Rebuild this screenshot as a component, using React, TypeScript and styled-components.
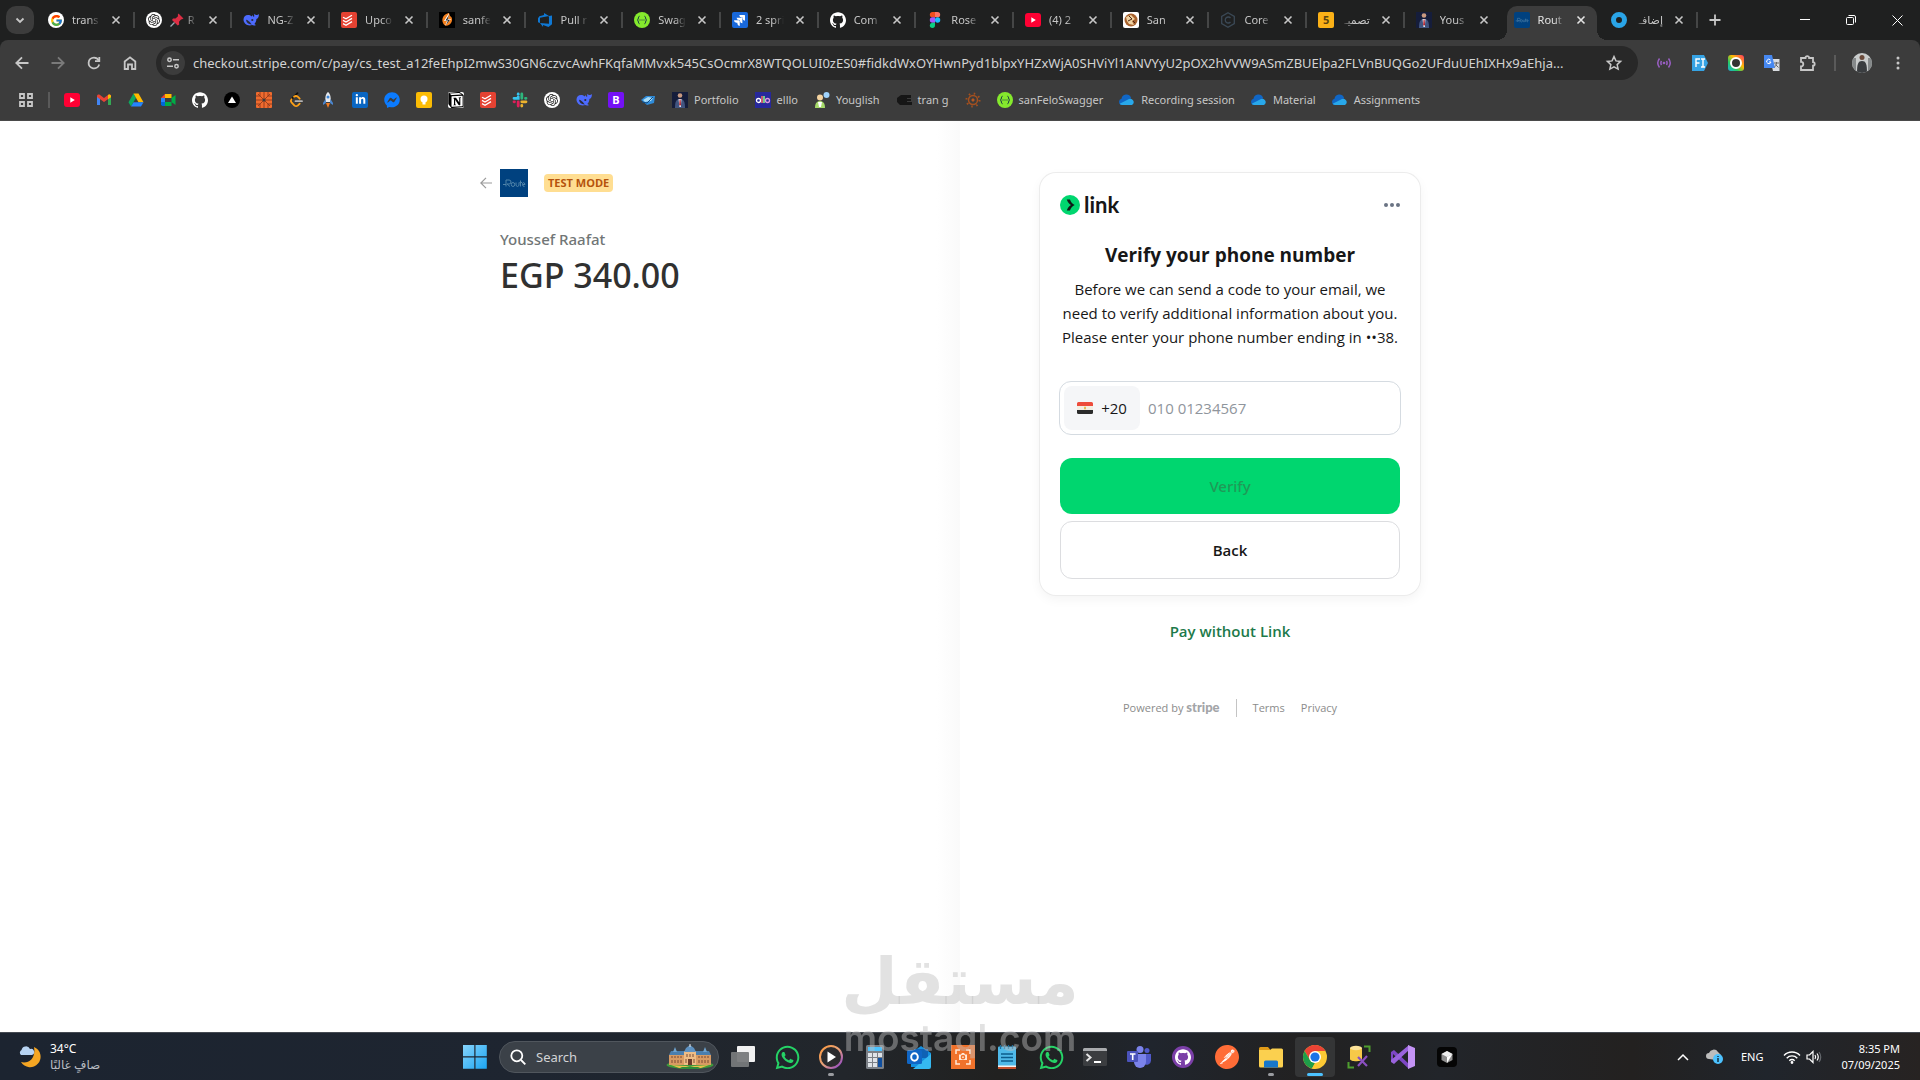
import React from 'react';
import styled, { createGlobalStyle, css } from 'styled-components';
import { FcGoogle } from 'react-icons/fc';
import { SiOpenai, SiGithub, SiJira, SiNotion, SiPostman } from 'react-icons/si';
import { FaWhatsapp, FaLinkedinIn, FaFacebookMessenger } from 'react-icons/fa';
import { VscAzureDevops } from 'react-icons/vsc';

const ui = '"Noto Sans", "Open Sans", "DejaVu Sans", sans-serif';
const pageFont = '"Open Sans", "Noto Sans", "DejaVu Sans", sans-serif';

const GlobalStyle = createGlobalStyle`
  *, *::before, *::after { box-sizing: border-box; }
  body { margin: 0; background: #fff; font-family: ${pageFont}; }
  button, input { font: inherit; color: inherit; border: 0; padding: 0; background: none; }
  button { display: inline-flex; align-items: center; justify-content: center; }
  a { color: inherit; text-decoration: none; }
  h1, h2, p { margin: 0; }
  svg { display: block; flex: none; }
`;

const Screen = styled.div`
  display: flex;
  flex-direction: column;
  min-height: 100vh;
  background: #1f2020;
`;

/* ---------- Browser chrome ---------- */

const TabStrip = styled.header`
  display: flex;
  height: 40px;
  background: #1f2020;
  color: #c7c7c7;
  font: 11px/16px ${ui};
`;

const TabSearchSlot = styled.div`
  flex: none;
  width: 37px;
  padding: 6px 3px 6px 6px;
`;

const TabSearch = styled.button`
  width: 28px;
  height: 28px;
  border-radius: 10px;
  background: #3c3c3c;
`;

const Tabs = styled.nav`
  display: flex;
  flex: 1;
  min-width: 0;
`;

const Tab = styled.div<{ $active?: boolean; $bare?: boolean }>`
  position: relative;
  display: flex;
  flex: 1 1 0;
  min-width: 0;
  align-items: center;
  gap: 8px;
  padding: 0 9px 0 11px;
  border-right: 2px solid transparent;
  background: ${p => (p.$active || p.$bare ? 'none' : 'linear-gradient(#454646, #454646) right center / 2px 16px no-repeat border-box')};
  ${p =>
    p.$active &&
    css`
      color: #e3e3e3;
      &::before {
        content: '';
        position: absolute;
        inset: 6px 1px 0 4px;
        border-radius: 10px 10px 0 0;
        background: #3c3c3c;
      }
      &::after {
        content: '';
        position: absolute;
        inset: auto -9px 0 -6px;
        height: 10px;
        background:
          radial-gradient(circle at 0 0, transparent 10px, #3c3c3c 10px) left / 10px 10px no-repeat,
          radial-gradient(circle at 100% 0, transparent 10px, #3c3c3c 10px) right / 10px 10px no-repeat;
      }
    `}
  & > * { position: relative; z-index: 1; }
`;

const TabTitle = styled.span<{ $rtl?: boolean }>`
  display: flex;
  flex: 1;
  align-items: center;
  gap: 4px;
  min-width: 0;
  overflow: hidden;
  white-space: nowrap;
  direction: ${p => (p.$rtl ? 'rtl' : 'ltr')};
  mask-image: linear-gradient(to ${p => (p.$rtl ? 'left' : 'right')}, #000 60%, transparent);
`;

const TabClose = styled.button`
  flex: none;
  width: 16px;
  height: 16px;
`;

const StripEnd = styled.div`
  display: flex;
  flex: none;
  width: 222px;
  align-items: center;
  justify-content: space-between;
  color: #fff;
`;

const NewTab = styled.button`
  width: 34px;
  height: 28px;
  color: #c7c7c7;
`;

const WindowButton = styled.button`
  width: 46px;
  height: 40px;
`;

const Row = styled.div`
  display: flex;
  align-items: center;
`;

const Toolbar = styled.div`
  display: flex;
  align-items: center;
  height: 46px;
  padding: 0 4px;
  border-radius: 8px 8px 0 0;
  background: #3c3c3c;
  color: #c7c7c7;
`;

const ToolButton = styled.button<{ $dim?: boolean }>`
  flex: none;
  width: 36px;
  height: 34px;
  color: ${p => (p.$dim ? '#7a7a7a' : '#c7c7c7')};
`;

const Omnibox = styled.label`
  display: flex;
  flex: 1;
  align-items: center;
  gap: 8px;
  height: 34px;
  margin: 0 8px;
  padding: 0 15px 0 5px;
  border-radius: 17px;
  background: #282828;
`;

const SiteInfo = styled.span`
  display: grid;
  place-items: center;
  width: 24px;
  height: 24px;
  border-radius: 50%;
  background: #3c3c3c;
`;

const Address = styled.input`
  flex: 1;
  min-width: 0;
  height: 24px;
  outline: 0;
  color: #d3d3d3;
  font: 13px/24px ${ui};
`;

const Divider = styled.span`
  flex: none;
  width: 2px;
  height: 16px;
  margin: 0 -2px;
  background: #5a5a5a;
`;

const ToolbarEnd = styled(Row)`
  flex: none;
`;

const DividerSlot = styled.span`
  display: flex;
  justify-content: center;
  width: 18px;
`;

const Bookmarks = styled.nav`
  display: flex;
  align-items: center;
  gap: 16px;
  height: 35px;
  padding: 0 18px 7px;
  border-bottom: 1px solid #4a4a4a;
  background: #3c3c3c;
  color: #c7c7c7;
  font: 11px/16px ${ui};
`;

const Bookmark = styled.a`
  display: flex;
  flex: none;
  align-items: center;
  gap: 6px;
  white-space: nowrap;
`;

const Tile = styled.span<{ $bg?: string; $fg?: string; $round?: boolean }>`
  display: grid;
  flex: none;
  place-items: center;
  width: 16px;
  height: 16px;
  overflow: hidden;
  border-radius: ${p => (p.$round ? '50%' : '2px')};
  background: ${p => p.$bg || 'transparent'};
  color: ${p => p.$fg || '#fff'};
  font: 700 11px/16px ${ui};
`;

/* ---------- Checkout page ---------- */

const Page = styled.main`
  display: flex;
  flex: 1;
  justify-content: center;
  padding: 48px 24px;
  background: linear-gradient(to right, #fff calc(50% - 24px), #fafafa 50%, #fff 50%);
`;

const Columns = styled.div`
  display: grid;
  grid-template-columns: 1fr 1fr;
  gap: 160px;
  width: 100%;
  max-width: 920px;
  align-items: start;
`;

const Summary = styled.section`
  display: flex;
  flex-direction: column;
`;

const Merchant = styled.div`
  display: flex;
  align-items: center;
  height: 28px;
  margin-left: -20px;
  margin-bottom: 28px;
`;

const BackLink = styled.a`
  width: 20px;
  color: #9a9a9a;
`;

const MerchantLogo = styled.span`
  display: grid;
  place-items: center;
  width: 28px;
  height: 28px;
  margin-right: 16px;
  background: #00417f;
`;

const TestBadge = styled.span`
  padding: 0 4px;
  border-radius: 4px;
  background: #ffde92;
  color: #b5530c;
  font: 700 11px/18px ${pageFont};
`;

const Payee = styled.p`
  color: #717676;
  font: 500 15px/28px ${ui};
`;

const Amount = styled.h1`
  color: #303131;
  font: 500 34px/44px ${ui};
`;

const Payment = styled.section`
  display: flex;
  flex-direction: column;
  align-items: center;
  padding-top: 4px;
`;

const Card = styled.form`
  display: flex;
  flex-direction: column;
  width: 100%;
  padding: 20px;
  padding-bottom: 16px;
  border-radius: 16px;
  box-shadow: 0 0 0 1px #ececec, 0 4px 12px rgba(0, 0, 0, 0.05);
  background: #fff;
  color: #171717;
`;

const CardHead = styled.div`
  display: flex;
  align-items: center;
  justify-content: space-between;
  height: 24px;
  margin-bottom: 24px;
`;

const LinkBrand = styled.span`
  display: flex;
  align-items: center;
  gap: 4px;
  font: 700 22px/24px Lato, sans-serif;
  color: #171717;
`;

const CardTitle = styled.h2`
  margin-bottom: 8px;
  font-size: 19px;
  font-weight: 700;
  line-height: 28px;
  text-align: center;
`;

const CardText = styled.p`
  margin: 0 -8px 32px;
  font-size: 15px;
  line-height: 24px;
  text-align: center;
`;

const PhoneField = styled.div`
  display: flex;
  align-items: center;
  gap: 8px;
  height: 54px;
  margin: 0 -1px 23px;
  padding: 0 4px;
  border: 1px solid #d5dbe1;
  border-radius: 12px;
  font-size: 15px;
`;

const CountryCode = styled.button`
  gap: 8px;
  width: 76px;
  height: 44px;
  border-radius: 8px;
  background: #f5f6f8;
`;

const PhoneInput = styled.input`
  flex: 1;
  min-width: 0;
  height: 44px;
  outline: 0;
  &::placeholder { color: #8f959c; opacity: 1; }
`;

const ActionButton = styled.button<{ $primary?: boolean }>`
  height: ${p => (p.$primary ? '56px' : '58px')};
  margin-bottom: ${p => (p.$primary ? '7px' : '0')};
  border: ${p => (p.$primary ? '0' : '1px solid #dcdde0')};
  border-radius: 12px;
  background: ${p => (p.$primary ? '#00d66f' : '#fff')};
  color: ${p => (p.$primary ? '#1f9a57' : '#171717')};
  font: ${p => (p.$primary ? 500 : 600)} 15px/24px ${p => (p.$primary ? ui : pageFont)};
`;

const PayWithout = styled.a`
  margin-top: 24px;
  color: #1d7a4a;
  font-size: 15px;
  font-weight: 600;
  line-height: 24px;
`;

const Legal = styled.footer`
  display: flex;
  align-items: center;
  gap: 16px;
  margin-top: 55px;
  color: #8b8b8b;
  font-size: 11px;
  line-height: 18px;
`;

const StripeMark = styled.b`
  font: 900 13px/18px Lato, sans-serif;
  color: #a3a5a8;
`;

const LegalRule = styled.span`
  width: 1px;
  height: 18px;
  background: #c4c4c4;
`;

/* ---------- Taskbar ---------- */

const Taskbar = styled.footer`
  display: grid;
  grid-template-columns: 1fr auto 1fr;
  align-items: center;
  height: 48px;
  border-top: 1px solid #454a52;
  background: linear-gradient(to right, #1c2430, #1e2530 28%, #22262b 44%, #212120 52%, #20252d 60%, #222121 68%, #22252a 75%, #232120 85%, #20252c 92%, #272322);
  color: #fff;
  font: 12px/16px ${ui};
`;

const Weather = styled(Row)`
  gap: 8px;
  padding-left: 18px;
`;

const Muted = styled.div`
  color: #b8bcc2;
`;

const Apps = styled.nav`
  display: flex;
  align-items: center;
`;

const StartButton = styled.button`
  width: 48px;
  height: 48px;
`;

const SearchBox = styled.label`
  display: flex;
  align-items: center;
  gap: 10px;
  width: 220px;
  height: 32px;
  margin-right: 2px;
  padding: 0 4px 0 10px;
  border: 1px solid #50565d;
  border-radius: 16px;
  background: #3b4148;
  input {
    flex: 1;
    min-width: 0;
    outline: 0;
    font-size: 13px;
  }
  input::placeholder { color: #d2d3d5; opacity: 1; }
`;

const AppButton = styled.button<{ $state?: 'open' | 'active' }>`
  position: relative;
  width: 40px;
  height: 40px;
  margin: 0 2px;
  border-radius: 4px;
  background: ${p => (p.$state === 'active' ? '#343536' : 'none')};
  ${p =>
    p.$state &&
    css`
      &::after {
        content: '';
        position: absolute;
        bottom: 1px;
        left: 50%;
        width: ${p.$state === 'active' ? 16 : 6}px;
        height: 3px;
        margin-left: ${p.$state === 'active' ? -8 : -3}px;
        border-radius: 2px;
        background: ${p.$state === 'active' ? '#4cc2ff' : '#9a9ca0'};
      }
    `}
`;

const Tray = styled(Row)`
  justify-content: flex-end;
  gap: 17px;
  padding-right: 20px;
  font-size: 11px;
`;

const Clock = styled.div`
  text-align: right;
`;

const Watermark = styled.div`
  position: fixed;
  inset: auto 0 22px;
  display: flex;
  flex-direction: column;
  align-items: center;
  color: rgba(190, 190, 190, 0.45);
  white-space: nowrap;
  pointer-events: none;
`;

const WatermarkArabic = styled.div`
  font: 700 65px/72px "DejaVu Sans", sans-serif;
`;

const WatermarkLatin = styled.div`
  font: 600 37px/40px Inter, sans-serif;
`;

/* ---------- Icons ---------- */

const X = () => (
  <svg width="16" height="16" viewBox="0 0 16 16" stroke="currentColor" strokeWidth="1.6" fill="none"><path d="M4.5 4.5l7 7M11.5 4.5l-7 7" /></svg>
);
const Yt = () => (
  <svg width="16" height="16" viewBox="0 0 16 16"><rect y="1" width="16" height="14" rx="3" fill="#ff0033" /><path d="M6.300 5.300v5.400L10.800 8z" fill="#fff" /></svg>
);
const Gpt = () => <Tile $bg="#fff" $fg="#222" $round><SiOpenai size={12} /></Tile>;
const TodoistMark = () => (
  <svg width="16" height="16" viewBox="0 0 16 16"><rect width="16" height="16" rx="2" fill="#e44232" /><path d="M2 5.200l3 1.600 6-3.600M2 8.400l3 1.600 6-3.600M2 11.600l3 1.600 6-3.600" fill="none" stroke="#fff" strokeWidth="1.300" /></svg>
);
const DeepSeek = () => (
  <svg width="16" height="16" viewBox="0 0 16 16"><path d="M.5 7.500C.5 5 2.300 3 5 3c1.500 0 2.500.4 3.600 1.500L9.500 3c.2.900.8 1.500 1.600 1.900.2-1.200 0-2.200.4-3.200.6 1 1.400 1.500 2.400 1.400.8-.1 1.300-.5 1.900-1 .3 2.400-.5 4.300-2.400 5 0 2-.8 3.700-2.100 4.900.5.500 1 .8 1.700 1-1.300.7-2.700.6-3.900.1C4.300 14.300.5 11.500.5 7.500z" fill="#4d6bfe" /><path d="M3 7.800c1.500.1 3.500 1.700 5 3.700.5.600.9.800.6.900C6 12.600 3.300 10.800 3 7.800z" fill="#2a2c3a" /><circle cx="9.300" cy="8" r="1.100" fill="#2a2c3a" /></svg>
);
const Figma = () => (
  <svg width="16" height="16" viewBox="0 0 16 16"><path d="M5.500 0H8v5.300H5.500a2.650 2.650 0 010-5.300z" fill="#f24e1e" /><path d="M8 0h2.500a2.650 2.650 0 010 5.300H8z" fill="#ff7262" /><path d="M5.500 5.300H8v5.400H5.500a2.700 2.700 0 010-5.400z" fill="#a259ff" /><circle cx="10.600" cy="8" r="2.650" fill="#1abcfe" /><path d="M5.500 10.700H8v2.600a2.600 2.600 0 11-2.500-2.600z" fill="#0acf83" /></svg>
);
const Swagger = () => (
  <svg width="16" height="16" viewBox="0 0 16 16"><circle cx="8" cy="8" r="8" fill="#85ea2d" /><g fill="none" stroke="#173647" strokeWidth="1"><path d="M5.600 4.200c-1.800 0-.6 3.200-2.300 3.800 1.700.6.500 3.800 2.300 3.800M10.400 4.200c1.800 0 .6 3.200 2.300 3.800-1.700.6-.5 3.800-2.300 3.800" /><path d="M5.500 8h5" strokeDasharray="1 1" /></g></svg>
);
const OneDrive = () => (
  <svg width="16" height="16" viewBox="0 0 16 16"><path d="M3.200 13A3.200 3.200 0 012.500 6.700 5 5 0 0112 5.500l-2 6z" fill="#1066c5" /><path d="M3 13c-1 0-1.800-.5-2.300-1.200L9 7.500c1.500-1 3.500-.8 4.500.3a3 3 0 01-.6 5.200z" fill="#28a8ea" /></svg>
);
const LeetCode = () => (
  <svg width="16" height="16" viewBox="0 0 16 16" fill="none" strokeWidth="1.800" strokeLinecap="round"><path d="M9.500 1.200L3.500 7.200" stroke="#111" /><path d="M3.500 7.200q-1.300 1.600 0 3.200l3 3.200q1.600 1.200 3.200 0l2-2" stroke="#ffa116" /><path d="M6 4.700q2-1.500 3.700 0l2 2" stroke="#ffa116" /><path d="M7.500 9.200h6.500" stroke="#b3b3b3" /></svg>
);
const Rocket = () => (
  <svg width="16" height="16" viewBox="0 0 16 16"><path d="M8 0c2.500 2 3 5 2.500 10h-5C5 5 5.500 2 8 0z" fill="#e6e9ee" /><circle cx="8" cy="5" r="1.500" fill="#3c86d8" /><path d="M5.500 7L3 11v2l3-2M10.500 7l2.500 4v2l-3-2" fill="#4a86d0" /><path d="M6 11h4l-2 5z" fill="#f37b21" /></svg>
);
const Gmail = () => (
  <svg width="16" height="16" viewBox="0 0 16 16"><path d="M1 4v9h3V6z" fill="#4285f4" /><path d="M15 4v9h-3V6z" fill="#34a853" /><path d="M1 4c0-1.600 1.700-2 2.700-1.200L8 6l4.300-3.200C13.300 2 15 2.400 15 4v1L8 10 1 5z" fill="#ea4335" /><path d="M12 3l1-.5c1 0 2 .5 2 1.500v1.200L12 7.300z" fill="#fbbc04" /></svg>
);
const Drive = () => (
  <svg width="16" height="16" viewBox="0 0 16 16"><path d="M5.500 1.500L.5 10.300 3 14.500l5-8.700z" fill="#0da960" /><path d="M5.500 1.500h5l5 8.800h-5z" fill="#ffba00" /><path d="M3 14.500l2.500-4.200h10L13 14.500z" fill="#2684fc" /></svg>
);
const Meet = () => (
  <svg width="16" height="16" viewBox="0 0 16 16"><path d="M1 6l4-4v4z" fill="#ea4335" /><path d="M5 2h6.500v4H5z" fill="#ffba00" /><path d="M1 6h4v4H1z" fill="#2684fc" /><path d="M1 10h4v4H2.500L1 13z" fill="#0066da" /><path d="M5 10h6.500v4H5zM11.500 6L15.500 3v10l-4-3z" fill="#00ac47" /></svg>
);
const Slack = () => (
  <svg width="16" height="16" viewBox="0 0 16 16" strokeWidth="2.800" strokeLinecap="round"><path d="M6.200 4.800V6.300H2" stroke="#36c5f0" fill="none" /><path d="M9.800 2v4.300M13.500 6.300h.5" stroke="#2eb67d" /><path d="M9.800 9.800H14M9.800 13.500v.5" stroke="#ecb22e" /><path d="M6.200 9.800V14M2 9.800h.5" stroke="#e01e5a" /><path d="M6.200 2v.2" stroke="#36c5f0" /></svg>
);
const Person = () => (
  <svg width="16" height="16" viewBox="0 0 16 16"><rect width="16" height="16" fill="#151d3b" /><circle cx="8" cy="3.500" r="2.300" fill="#c99a80" /><path d="M3 16c0-6 1-9 5-9s5 3 5 9z" fill="#41547f" /><path d="M6.500 7h3L8.800 15H7.500z" fill="#f2f4f8" /><path d="M7.600 7.500h1l.4 5-1 1.500-.8-1.500z" fill="#b1202b" /></svg>
);
const Blossom = () => (
  <svg width="16" height="16" viewBox="0 0 16 16"><rect width="16" height="16" rx="1" fill="#ef6b2e" /><path d="M0 8h16M8 0v16M2 2l12 12M14 2L2 14M4 0v4H0M12 0v4h4M4 16v-4H0M12 16v-4h4" stroke="#8e3a1d" strokeWidth=".9" fill="none" /><circle cx="8" cy="8" r="1.500" fill="#3c3c3c" /></svg>
);
const Flame = () => (
  <svg width="16" height="16" viewBox="0 0 16 16"><rect width="16" height="16" fill="#000" /><path d="M10 1C5 2 2 6 4 11c1 3 5 4 8 0 2-3 1-6-1-7z" fill="#f58220" /><path d="M10 1L5 9h3l-2 5 6-7H9z" fill="#fff" /><path d="M10 3L6.500 8.500H9L7 13l4-5.300H8.500z" fill="#222" /></svg>
);
const Gear = () => (
  <svg width="16" height="16" viewBox="0 0 16 16" fill="none" stroke="#a4501f"><circle cx="8" cy="8" r="4.500" strokeWidth="1.500" /><circle cx="8" cy="8" r="6.500" strokeWidth="2" strokeDasharray="1.500 3.600" /><circle cx="8" cy="8" r="1.200" fill="#e07030" /></svg>
);
const Pin = () => (
  <svg width="14" height="14" viewBox="0 0 14 14"><path d="M8.500.5L13.500 5.500l-1.500.8-1 .2-2 2.300.2 2.700-1.500 1L2 7l1-1.500 2.500.1L8 3.200l-.2-1.400z" fill="#dd2e44" /><path d="M4.500 9.500L.5 13.500" stroke="#99aab5" strokeWidth="1.300" /></svg>
);
const Ring = () => (
  <svg width="16" height="16" viewBox="0 0 16 16"><circle cx="8" cy="8" r="5.500" fill="none" stroke="#2aa5e8" strokeWidth="5" /></svg>
);
const RouteDrawing = ({ size }: { size: number }) => (
  <svg width={size} height={size} viewBox="0 0 28 28" fill="none" stroke="#4f83a9"><path d="M3 15.500h3M6 17.500V11h3a2 2 0 010 4H7l3 2.500" /><ellipse cx="13" cy="15.500" rx="1.700" ry="2" /><path d="M16 13.500v3q1.500 2 3 0v-3M20.500 11.500v6M19.500 13.500h2.500M22.500 15.500h2.500q-.5-2-1.500-2t-1 2 2 2" /></svg>
);
const WinLogo = () => (
  <svg width="24" height="24" viewBox="0 0 24 24"><defs><linearGradient id="win" x1="0" y1="0" x2="1" y2="1"><stop offset="0" stopColor="#86d3fb" /><stop offset="1" stopColor="#1ba5f2" /></linearGradient></defs><path d="M0 0h11.300v11.300H0zM12.500 0h11.300v11.300H12.500zM0 12.500h11.300v11.300H0zM12.500 12.500h11.300v11.300H12.500z" fill="url(#win)" /></svg>
);
const Palace = () => (
  <svg width="48" height="26" viewBox="0 0 48 26">
    <ellipse cx="24" cy="21" rx="23.500" ry="4" fill="#3f9a3b" />
    <path d="M3 11h42v10H3z" fill="#d99b63" />
    <path d="M3 11l2-4h13v4zM45 11l-2-4H30v4z" fill="#4c7fae" />
    <path d="M18 7h12v14H18z" fill="#eebd86" /><path d="M18 8l2-4 4-3 4 3 2 4z" fill="#5e92c2" />
    <path d="M7 8l2-5 2 5zM37 8l2-5 2 5z" fill="#6fa3cf" />
    <path d="M24 0v3" stroke="#e8e8e8" />
    <path d="M6 12v2M9 12v2M12 12v2M15 12v2M33 12v2M36 12v2M39 12v2M42 12v2M6 16v3M9 16v3M12 16v3M15 16v3M33 16v3M36 16v3M39 16v3M42 16v3M21 10v3M24 10v3M27 10v3M20 15v4M28 15v4" stroke="#7a4b34" />
    <path d="M22 15h4v6h-4z" fill="#6b3a2a" /><path d="M5 21l15 1 4 1 4-1 15-1-8 3H13z" fill="#e8c04b" /><path d="M14 23h20l-4 2H18z" fill="#2e8a39" />
  </svg>
);
const MoonCloud = () => (
  <svg width="24" height="24" viewBox="0 0 24 24"><path d="M16 2a10.500 10.500 0 11-13 15c8 2 15-4 13-15z" fill="#f5a623" /><path d="M3 10a3 3 0 01.5-5A4.500 4.500 0 0112 4a3 3 0 012 6z" fill="#b7d3f2" /></svg>
);
const TaskView = () => (
  <svg width="24" height="24" viewBox="0 0 24 24"><rect x="6" y="1" width="18" height="16" rx="1" fill="#f1f1f1" /><rect y="7" width="18" height="15" rx="1" fill="#77797b" fillOpacity=".95" /></svg>
);
const MediaPlayer = () => (
  <svg width="24" height="24" viewBox="0 0 24 24"><defs><linearGradient id="mp" x1="0" y1="0" x2="1" y2="1"><stop offset="0" stopColor="#ff9a3c" /><stop offset=".5" stopColor="#e7a27a" /><stop offset="1" stopColor="#8a3fd1" /></linearGradient></defs><circle cx="12" cy="12" r="11" fill="#2b2b2d" stroke="url(#mp)" strokeWidth="2" /><path d="M8.500 6.500v11l8.500-5.500z" fill="#fff" /></svg>
);
const Calculator = () => (
  <svg width="24" height="24" viewBox="0 0 24 24"><rect x="3" width="18" height="24" rx="1.500" fill="#7b8087" /><rect x="5" y="2" width="14" height="4" fill="#4cc2ff" /><path d="M5 8h4v4H5zM10 8h4v4h-4zM15 8h4v4h-4zM5 13h4v4H5zM10 13h4v4h-4zM5 18h4v4H5zM10 18h4v4h-4z" fill="#dfe3e8" /><path d="M15 13h4v9h-4z" fill="#0f4fa0" /></svg>
);
const Outlook = () => (
  <svg width="24" height="24" viewBox="0 0 24 24"><path d="M4 8l10-7 10 7v14H4z" fill="#1490df" /><path d="M7 4h14v9H7z" fill="#0f62b5" /><path d="M24 9v13a2 2 0 01-2 2H6L24 9z" fill="#35b8f1" /><rect y="5" width="15" height="14" rx="1.500" fill="#1066c5" /><ellipse cx="7.500" cy="12" rx="3.300" ry="3.700" fill="none" stroke="#fff" strokeWidth="2" /></svg>
);
const Capture = () => (
  <svg width="24" height="24" viewBox="0 0 24 24" fill="none" stroke="#ffe9d8" strokeWidth="1.500"><rect width="24" height="24" fill="#f0722b" stroke="none" /><path d="M5 9V5h4M15 5h4v4M19 15v4h-4M9 19H5v-4" /><path d="M8 9.500h2l1-1.500h2l1 1.500h2V15H8z" fill="#ffe9d8" stroke="none" /><circle cx="12" cy="12.200" r="1.600" stroke="#f0722b" /></svg>
);
const Notepad = () => (
  <svg width="24" height="24" viewBox="0 0 24 24"><rect x="3" y="19" width="18" height="5" fill="#c5512d" /><rect x="3" y="1.500" width="18" height="20" rx="1" fill="#4fb9e8" /><path d="M3 20.500h18v1.500H3z" fill="#f3f3f3" /><path d="M6 9h12M6 12.500h12M6 16h12" stroke="#0c5c8c" strokeWidth="1.500" /><path d="M5.500 0v4M9.500 0v4M13.500 0v4M17.500 0v4" stroke="#1d6d9b" strokeWidth="1.300" /></svg>
);
const Terminal = () => (
  <svg width="24" height="24" viewBox="0 0 24 24"><rect y="3" width="24" height="18" rx="1.500" fill="#3b3d40" /><path d="M0 4.500A1.500 1.500 0 011.500 3h21A1.500 1.500 0 0124 4.500V6H0z" fill="#a9abae" /><path d="M3.500 9l4 3.500-4 3.500" fill="none" stroke="#e5e5e5" strokeWidth="2" /><path d="M11 17h7" stroke="#fff" strokeWidth="2" /></svg>
);
const Teams = () => (
  <svg width="24" height="24" viewBox="0 0 24 24"><circle cx="13" cy="4.500" r="3.500" fill="#7b83eb" /><circle cx="20" cy="5.500" r="2.500" fill="#5059c9" /><path d="M15 9h9v6a4.500 4.500 0 01-7 4z" fill="#5059c9" /><path d="M7 9h12v8a6 6 0 01-12 0z" fill="#7b83eb" /><rect y="6" width="11" height="11" rx="1" fill="#4b53bc" /><path d="M3 9h5.500M5.700 9v6" stroke="#fff" strokeWidth="1.600" /></svg>
);
const GitHubDesktop = () => (
  <svg width="22" height="22" viewBox="0 0 22 22"><circle cx="11" cy="11" r="11" fill="#7b3fa8" /><g transform="translate(3 3)"><SiGithub size={16} color="#fff" /></g></svg>
);
const Explorer = () => (
  <svg width="24" height="24" viewBox="0 0 24 24"><path d="M0 3.500A1.500 1.500 0 011.500 2H9l2.500 3H0z" fill="#e09b18" /><path d="M0 5h11l2-1.500h9.500A1.500 1.500 0 0124 5v16a1.500 1.500 0 01-1.500 1.500h-21A1.500 1.500 0 010 21z" fill="#fbd04f" /><path d="M5 22.500V17a1.500 1.500 0 011.500-1.500h11A1.500 1.500 0 0119 17v5.500z" fill="#1877c9" /></svg>
);
const Chrome = () => (
  <svg width="24" height="24" viewBox="0 0 24 24"><circle cx="12" cy="12" r="12" fill="#fcc934" /><path d="M1.600 6A12 12 0 0122.400 6H12L7 15z" fill="#ea4335" /><path d="M1.600 6L7 15l5 3-3 5.600A12 12 0 011.600 6z" fill="#1e9e49" /><path d="M12 18l5.200-3L12 24a12 12 0 01-3-.4z" fill="#fcc934" /><circle cx="12" cy="12" r="6" fill="#fff" /><circle cx="12" cy="12" r="4.600" fill="#1a73e8" /></svg>
);
const SqlTools = () => (
  <svg width="24" height="24" viewBox="0 0 24 24"><path d="M3 3v11c0 3 12 3 12 0V3z" fill="#f7c948" /><ellipse cx="9" cy="3" rx="6" ry="2.200" fill="#fde39a" /><path d="M17 1.500h5.500V7M1.500 17v5.500H7" fill="none" stroke="#4f9e2f" strokeWidth="2" /><path d="M11 12l9 9M20 11l-9 10" stroke="#8b4fc0" strokeWidth="2.200" /></svg>
);
const VisualStudio = () => (
  <svg width="24" height="24" viewBox="0 0 24 24"><path d="M0 7l3-2 15 14v5L2 9v6l-2 2z" fill="#7d46c4" /><path d="M0 17l3 2L18 5V0L0 15z" fill="#9a63dd" /><path d="M17 0l7 3v18l-7 3z" fill="#c493f5" /></svg>
);
const CursorApp = () => (
  <svg width="20" height="20" viewBox="0 0 20 20"><rect width="20" height="20" rx="4" fill="#050505" /><path d="M10 4l5.500 3v6L10 16l-5.500-3V7z" fill="#8d8d8d" /><path d="M4.500 7L10 4l5.500 3L10 10z" fill="#efefef" /><path d="M15.500 7L10 16v-6z" fill="#fff" /></svg>
);
const Keep = () => (
  <svg width="16" height="16" viewBox="0 0 16 16"><rect width="16" height="16" rx="2" fill="#fbbc04" /><circle cx="8" cy="7" r="3.500" fill="#fff" /><path d="M6.500 9.500h3v3h-3z" fill="#fff" /></svg>
);
const Pencils = () => (
  <svg width="16" height="16" viewBox="0 0 16 16"><path d="M1 8l5-4 9 0-1 7-7 2z" fill="#2f8bd8" /><path d="M3 8l5-3 5 1-2 3-6 1z" fill="#a8dcf8" /><path d="M2 10l5 1 6-6" stroke="#0f4c86" fill="none" /></svg>
);
const Youglish = () => (
  <svg width="16" height="16" viewBox="0 0 16 16"><circle cx="6" cy="5.500" r="3" fill="#f4d3a0" /><path d="M1 16c0-5 2-7 5-7s5 2 5 7z" fill="#a6d96a" /><path d="M4 10h4l-1 5H5z" fill="#fff" /><circle cx="12.500" cy="3" r="3" fill="#9fd2fb" /></svg>
);
const Brush = () => (
  <svg width="16" height="16" viewBox="0 0 16 16"><path d="M1 6l4-3h10v3h-4v1h4v2h-4v1h5v3H4l-3-3z" fill="#161616" /></svg>
);

/* ---------- Data ---------- */

const tabs: { title: string; icon: React.ReactNode; rtl?: boolean; active?: boolean; bare?: boolean; pin?: boolean }[] = [
  { title: 'trans', icon: <Tile $bg="#fff" $round><FcGoogle size={13} /></Tile> },
  { title: 'R', icon: <Gpt />, pin: true },
  { title: 'NG-Z', icon: <DeepSeek /> },
  { title: 'Upco', icon: <TodoistMark /> },
  { title: 'sanfe', icon: <Flame /> },
  { title: 'Pull r', icon: <VscAzureDevops size={16} color="#0f78d4" /> },
  { title: 'Swag', icon: <Swagger /> },
  { title: '2 spri', icon: <Tile $bg="#1868db"><SiJira size={11} /></Tile> },
  { title: 'Com', icon: <SiGithub size={16} color="#fff" /> },
  { title: 'Rose', icon: <Figma /> },
  { title: '(4) 2', icon: <Yt /> },
  { title: 'San', icon: <Tile $bg="#fff"><svg width="14" height="14" viewBox="0 0 14 14"><circle cx="7" cy="7" r="6.500" fill="#a8622e" /><path d="M2 4l5-2 4 4-3 2 2 4-5-1-2-3z" fill="#f0d2a2" /><path d="M5 3l3 3-4 2M9 8l2 2" stroke="#4a2514" fill="none" /></svg></Tile> },
  { title: 'Core', icon: <svg width="16" height="16" viewBox="0 0 16 16" fill="none" stroke="#3b4956" strokeWidth="1.300"><path d="M8 .8l6.300 3.600v7.200L8 15.200 1.700 11.600V4.400z" /><path d="M10.500 6a3 3 0 100 4" /></svg> },
  { title: 'تصميـ', icon: <Tile $bg="#fbb117" $fg="#5a4310">5</Tile>, rtl: true },
  { title: 'Yous', icon: <Person />, bare: true },
  { title: 'Rout', icon: <Tile $bg="#00417f"><RouteDrawing size={16} /></Tile>, active: true },
  { title: 'إضافـ', icon: <Ring />, rtl: true },
];

const bookmarks: { name: string; icon: React.ReactNode; label?: string }[] = [
  { name: 'YouTube', icon: <Yt /> },
  { name: 'Gmail', icon: <Gmail /> },
  { name: 'Drive', icon: <Drive /> },
  { name: 'Meet', icon: <Meet /> },
  { name: 'GitHub', icon: <SiGithub size={16} color="#fff" /> },
  { name: 'Vercel', icon: <Tile $bg="#000" $round><svg width="8" height="8" viewBox="0 0 8 8"><path d="M4 .5L8 7H0z" fill="#fff" /></svg></Tile> },
  { name: 'Blossom', icon: <Blossom /> },
  { name: 'LeetCode', icon: <LeetCode /> },
  { name: 'Rocket', icon: <Rocket /> },
  { name: 'LinkedIn', icon: <Tile $bg="#0a66c2"><FaLinkedinIn size={11} /></Tile> },
  { name: 'Messenger', icon: <FaFacebookMessenger size={16} color="#0b7bff" /> },
  { name: 'Keep', icon: <Keep /> },
  { name: 'Notion', icon: <Tile $bg="#fff" $fg="#000"><SiNotion size={16} /></Tile> },
  { name: 'Todoist', icon: <TodoistMark /> },
  { name: 'Slack', icon: <Slack /> },
  { name: 'ChatGPT', icon: <Gpt /> },
  { name: 'DeepSeek', icon: <DeepSeek /> },
  { name: 'Bootstrap', icon: <Tile $bg="#7411f5">B</Tile> },
  { name: 'Notes', icon: <Pencils /> },
  { name: 'Portfolio', icon: <Person />, label: 'Portfolio' },
  { name: 'elllo', icon: <svg width="16" height="16" viewBox="0 0 16 16"><rect width="16" height="16" fill="#27289b" /><circle cx="3.500" cy="8.500" r="2" fill="none" stroke="#fff" strokeWidth="1.300" /><path d="M7 4v7" stroke="#f66" strokeWidth="1.500" /><path d="M9 4v7" stroke="#8f8" strokeWidth="1.500" /><circle cx="12.500" cy="8.500" r="2" fill="none" stroke="#d9d" strokeWidth="1.300" /></svg>, label: 'elllo' },
  { name: 'Youglish', icon: <Youglish />, label: 'Youglish' },
  { name: 'tran g', icon: <Brush />, label: 'tran g' },
  { name: 'Gear', icon: <Gear /> },
  { name: 'sanFeloSwagger', icon: <Swagger />, label: 'sanFeloSwagger' },
  { name: 'Recording session', icon: <OneDrive />, label: 'Recording session' },
  { name: 'Material', icon: <OneDrive />, label: 'Material' },
  { name: 'Assignments', icon: <OneDrive />, label: 'Assignments' },
];

const apps: { name: string; icon: React.ReactNode; state?: 'open' | 'active' }[] = [
  { name: 'Task view', icon: <TaskView /> },
  { name: 'WhatsApp', icon: <FaWhatsapp size={27} color="#25d366" /> },
  { name: 'Media Player', icon: <MediaPlayer />, state: 'open' },
  { name: 'Calculator', icon: <Calculator /> },
  { name: 'Outlook', icon: <Outlook /> },
  { name: 'Screen capture', icon: <Capture /> },
  { name: 'Notepad', icon: <Notepad /> },
  { name: 'WhatsApp Web', icon: <FaWhatsapp size={27} color="#25d366" /> },
  { name: 'Terminal', icon: <Terminal /> },
  { name: 'Teams', icon: <Teams /> },
  { name: 'GitHub Desktop', icon: <GitHubDesktop /> },
  { name: 'Postman', icon: <Postman /> },
  { name: 'File Explorer', icon: <Explorer />, state: 'open' },
  { name: 'Chrome', icon: <Chrome />, state: 'active' },
  { name: 'SQL Tools', icon: <SqlTools /> },
  { name: 'Visual Studio', icon: <VisualStudio /> },
  { name: 'Cursor', icon: <CursorApp /> },
];

function Postman() {
  return (
    <svg width="24" height="24" viewBox="0 0 24 24"><circle cx="12" cy="12" r="11" fill="#fff" /><SiPostman size={24} color="#ff6c37" /></svg>
  );
}

const url =
  'checkout.stripe.com/c/pay/cs_test_a12feEhpI2mwS30GN6czvcAwhFKqfaMMvxk545CsOcmrX8WTQOLUI0zES0#fidkdWxOYHwnPyd1blpxYHZxWjA0SHViYl1ANVYyU2pOX2hVVW9ASmZBUElpa2FLVnBUQGo2UFduUEhIXHx9aEhja...';

/* ---------- App ---------- */

const line = { fill: 'none', stroke: 'currentColor', strokeWidth: 1.8 } as const;

export default function App() {
  return (
    <Screen>
      <GlobalStyle />
      <TabStrip>
        <TabSearchSlot>
          <TabSearch aria-label="Search tabs"><svg width="16" height="16" viewBox="0 0 16 16" {...line}><path d="M4.500 6.500L8 10l3.500-3.500" /></svg></TabSearch>
        </TabSearchSlot>
        <Tabs>
          {tabs.map(t => (
            <Tab key={t.title} $active={t.active} $bare={t.bare}>
              {t.icon}
              <TabTitle $rtl={t.rtl}>{t.pin && <Pin />}{t.title}</TabTitle>
              <TabClose aria-label={`Close ${t.title}`}><X /></TabClose>
            </Tab>
          ))}
        </Tabs>
        <StripEnd>
          <NewTab aria-label="New tab"><svg width="16" height="16" viewBox="0 0 16 16" {...line}><path d="M8 2.500v11M2.500 8h11" /></svg></NewTab>
          <Row>
            <WindowButton aria-label="Minimize"><svg width="10" height="10" viewBox="0 0 10 10" stroke="currentColor"><path d="M0 4.500h10" /></svg></WindowButton>
            <WindowButton aria-label="Restore"><svg width="10" height="10" viewBox="0 0 10 10" fill="none" stroke="currentColor"><rect x=".5" y="2.500" width="7" height="7" rx="1" /><path d="M2.500.5H8A1.500 1.500 0 019.500 2v5.500" /></svg></WindowButton>
            <WindowButton aria-label="Close window"><svg width="11" height="11" viewBox="0 0 11 11" stroke="currentColor"><path d="M.5.5l10 10M10.500.5l-10 10" /></svg></WindowButton>
          </Row>
        </StripEnd>
      </TabStrip>

      <Toolbar>
        <ToolButton aria-label="Back"><svg width="16" height="16" viewBox="0 0 16 16" {...line}><path d="M14.500 8H2.500M8 2.300L2.300 8 8 13.700" /></svg></ToolButton>
        <ToolButton $dim aria-label="Forward"><svg width="16" height="16" viewBox="0 0 16 16" {...line}><path d="M1.500 8h12M8 2.300L13.700 8 8 13.700" /></svg></ToolButton>
        <ToolButton aria-label="Reload"><svg width="16" height="16" viewBox="0 0 16 16" {...line}><path d="M13.200 9.500A5.400 5.400 0 118 2.600c2.200 0 3.900 1.200 4.900 3" /><path d="M13.300 2v4.200H9" /></svg></ToolButton>
        <ToolButton aria-label="Home"><svg width="16" height="16" viewBox="0 0 16 16" {...line}><path d="M2.700 14V6.500L8 2.300l5.300 4.200V14H10V9.500H6V14z" /></svg></ToolButton>
        <Omnibox>
          <SiteInfo><svg width="14" height="14" viewBox="0 0 14 14" fill="none" stroke="#c7c7c7" strokeWidth="1.500"><circle cx="3.500" cy="3.700" r="1.700" /><path d="M7 3.700h6M1 10.300h6" /><circle cx="10.500" cy="10.300" r="1.700" /></svg></SiteInfo>
          <Address aria-label="Address" defaultValue={url} />
          <svg width="18" height="18" viewBox="0 0 24 24" fill="none" stroke="#c7c7c7" strokeWidth="2"><path d="M12 3.500l2.600 5.700 6.200.7-4.600 4.200 1.300 6.100-5.500-3.100-5.500 3.100 1.300-6.100L3.200 9.900l6.200-.7z" /></svg>
        </Omnibox>
        <ToolbarEnd>
          <ToolButton aria-label="Live"><svg width="16" height="16" viewBox="0 0 16 16" fill="none" stroke="#9a5fc4" strokeWidth="1.500"><path d="M3.500 3.500Q0 8 3.500 12.500M12.500 3.500Q16 8 12.500 12.500M5.500 6Q4.300 8 5.500 10M10.500 6Q11.700 8 10.500 10" /><circle cx="8" cy="8" r=".6" /></svg></ToolButton>
          <ToolButton aria-label="Font inspector"><svg width="16" height="16" viewBox="0 0 16 16"><path d="M0 0h12l4 8-4 8H0z" fill="#36a3e4" /><path d="M4 12V4h4M4 8h3.500M9 4h4M11 4v8M9 12h4" stroke="#fff" strokeWidth="1.400" fill="none" /></svg></ToolButton>
          <ToolButton aria-label="Colour picker"><svg width="16" height="16" viewBox="0 0 16 16"><defs><linearGradient id="cp" x1="0" y1="1" x2="1" y2="0"><stop offset="0" stopColor="#2ad" /><stop offset=".3" stopColor="#2c6" /><stop offset=".6" stopColor="#fb0" /><stop offset="1" stopColor="#f36" /></linearGradient></defs><rect width="16" height="16" rx="3" fill="url(#cp)" /><circle cx="8" cy="8" r="5" fill="#333" stroke="#fff" strokeWidth="2" /></svg></ToolButton>
          <ToolButton aria-label="Translate"><svg width="16" height="16" viewBox="0 0 16 16"><path d="M6 4h9.500v12H9z" fill="#d9dce0" /><path d="M0 0h8l3 13H0z" fill="#4688f1" /><path d="M6.500 5A2.200 2.200 0 107 7H5" stroke="#fff" fill="none" /><path d="M10 8h5M12.500 7v1c0 2-1 3.500-2 4M11.500 9.500l3 3" stroke="#666" fill="none" /></svg></ToolButton>
          <ToolButton aria-label="Extensions"><svg width="18" height="18" viewBox="0 0 18 18" {...line}><path d="M2 4h4.500a1.800 1.800 0 013.600 0H14v4.200a1.700 1.700 0 010 3.400V16H2v-3.500a2.300 2.300 0 000-4.600z" /></svg></ToolButton>
          <DividerSlot><Divider /></DividerSlot>
          <ToolButton aria-label="Profile"><svg width="20" height="20" viewBox="0 0 20 20"><defs><clipPath id="av"><circle cx="10" cy="10" r="10" /></clipPath></defs><g clipPath="url(#av)"><rect width="20" height="20" fill="#c9cccc" /><path d="M0 5h4v15H0zM16 5h4v15h-4z" fill="#85898a" /><circle cx="10" cy="4.500" r="2.500" fill="#6a4a3b" /><path d="M5 20c0-9 1-12 5-12s5 3 5 12z" fill="#3a3d40" /></g></svg></ToolButton>
          <ToolButton aria-label="Menu"><svg width="16" height="16" viewBox="0 0 16 16" fill="currentColor"><circle cx="8" cy="3" r="1.500" /><circle cx="8" cy="8" r="1.500" /><circle cx="8" cy="13" r="1.500" /></svg></ToolButton>
        </ToolbarEnd>
      </Toolbar>

      <Bookmarks>
        <Bookmark href="#" aria-label="Apps"><svg width="16" height="16" viewBox="0 0 16 16" {...line}><path d="M2 2h4v4H2zM10 2h4v4h-4zM2 10h4v4H2zM10 10h4v4h-4z" /></svg></Bookmark>
        <Divider />
        {bookmarks.map(b => (
          <Bookmark key={b.name} href="#" aria-label={b.name}>{b.icon}{b.label}</Bookmark>
        ))}
      </Bookmarks>

      <Page>
        <Columns>
          <Summary>
            <Merchant>
              <BackLink href="#" aria-label="Back to merchant"><svg width="12" height="12" viewBox="0 0 12 12" fill="none" stroke="currentColor" strokeWidth="1.200"><path d="M12 6H1M6 .8L.8 6 6 11.200" /></svg></BackLink>
              <MerchantLogo><RouteDrawing size={28} /></MerchantLogo>
              <TestBadge>TEST MODE</TestBadge>
            </Merchant>
            <Payee>Youssef Raafat</Payee>
            <Amount>EGP 340.00</Amount>
          </Summary>

          <Payment>
            <Card onSubmit={e => e.preventDefault()}>
              <CardHead>
                <LinkBrand>
                  <svg width="20" height="20" viewBox="0 0 20 20"><circle cx="10" cy="10" r="10" fill="#00d66f" /><path d="M6.800 4.500h3.200c.7 2.600 2.300 4.500 4.700 5.500-2.400 1-4 2.900-4.700 5.500H6.800c.8-2.500 2.200-4.400 4.200-5.500C9 8.900 7.600 7 6.800 4.500z" fill="#0f1a16" /></svg>
                  link
                </LinkBrand>
                <button type="button" aria-label="More options"><svg width="16" height="6" viewBox="0 0 16 6" fill="#6a7383"><circle cx="2" cy="3" r="2" /><circle cx="8" cy="3" r="2" /><circle cx="14" cy="3" r="2" /></svg></button>
              </CardHead>
              <CardTitle>Verify your phone number</CardTitle>
              <CardText>
                Before we can send a code to your email, we<br />
                need to verify additional information about you.<br />
                Please enter your phone number ending in ••38.
              </CardText>
              <PhoneField>
                <CountryCode type="button" aria-label="Country code">
                  <svg width="16" height="12" viewBox="0 0 16 12"><path d="M0 4V1.500A1.500 1.500 0 011.500 0h13A1.500 1.500 0 0116 1.500V4z" fill="#ed4c3c" /><path d="M0 8v2.500A1.500 1.500 0 001.500 12h13a1.500 1.500 0 001.500-1.500V8z" fill="#2b2b2b" /><path d="M0 4h16v4H0z" fill="#f3eee2" /><path d="M7 4.800h2v2.500H7z" fill="#e7bd5a" /></svg>
                  +20
                </CountryCode>
                <PhoneInput type="tel" aria-label="Phone number" placeholder="010 01234567" />
              </PhoneField>
              <ActionButton $primary type="submit">Verify</ActionButton>
              <ActionButton type="button">Back</ActionButton>
            </Card>
            <PayWithout href="#">Pay without Link</PayWithout>
            <Legal>
              <span>Powered by <StripeMark>stripe</StripeMark></span>
              <LegalRule />
              <a href="#">Terms</a>
              <a href="#">Privacy</a>
            </Legal>
          </Payment>
        </Columns>
      </Page>

      <Taskbar>
        <Weather>
          <MoonCloud />
          <div>
            <div>34°C</div>
            <Muted dir="rtl">صافٍ غالبًا</Muted>
          </div>
        </Weather>
        <Apps>
          <StartButton aria-label="Start"><WinLogo /></StartButton>
          <SearchBox>
            <svg width="16" height="16" viewBox="0 0 16 16" {...line}><circle cx="6.800" cy="6.800" r="5.500" /><path d="M11 11l4.300 4.300" /></svg>
            <input aria-label="Search" placeholder="Search" />
            <Palace />
          </SearchBox>
          {apps.map(a => (
            <AppButton key={a.name} aria-label={a.name} $state={a.state}>{a.icon}</AppButton>
          ))}
        </Apps>
        <Tray>
          <svg width="12" height="12" viewBox="0 0 12 12" fill="none" stroke="#fff" strokeWidth="1.500"><path d="M1 9l5-5 5 5" /></svg>
          <svg width="18" height="16" viewBox="0 0 18 16"><path d="M3 10a3 3 0 010-6 5 5 0 019-1l3 3-5 5z" fill="#bdbdbd" /><circle cx="12" cy="10" r="5" fill="#4cc2ff" /><path d="M12 9v4M12 7v1" stroke="#14303f" strokeWidth="1.500" /></svg>
          <span>ENG</span>
          <Row>
            <svg width="24" height="16" viewBox="0 0 24 16" fill="none" stroke="#fff" strokeWidth="1.400"><path d="M4 6.500a11 11 0 0116 0M6.700 9.200a7.300 7.300 0 0110.600 0M9.300 11.700a3.800 3.800 0 015.400 0" /><circle cx="12" cy="13.500" r=".7" fill="#fff" /></svg>
            <svg width="20" height="16" viewBox="0 0 20 16" fill="none" stroke="#fff" strokeWidth="1.200"><path d="M3 6h2.500L9 2.500v11L5.500 10H3z" /><path d="M11 6q1.300 2 0 4M13 4.500q2.500 3.500 0 7" /><path d="M15 3q3.500 5 0 10" stroke="#66696e" /></svg>
          </Row>
          <Clock>
            <div>8:35 PM</div>
            <div>07/09/2025</div>
          </Clock>
        </Tray>
      </Taskbar>

      <Watermark>
        <WatermarkArabic>مستقل</WatermarkArabic>
        <WatermarkLatin>mostaql.com</WatermarkLatin>
      </Watermark>
    </Screen>
  );
}
